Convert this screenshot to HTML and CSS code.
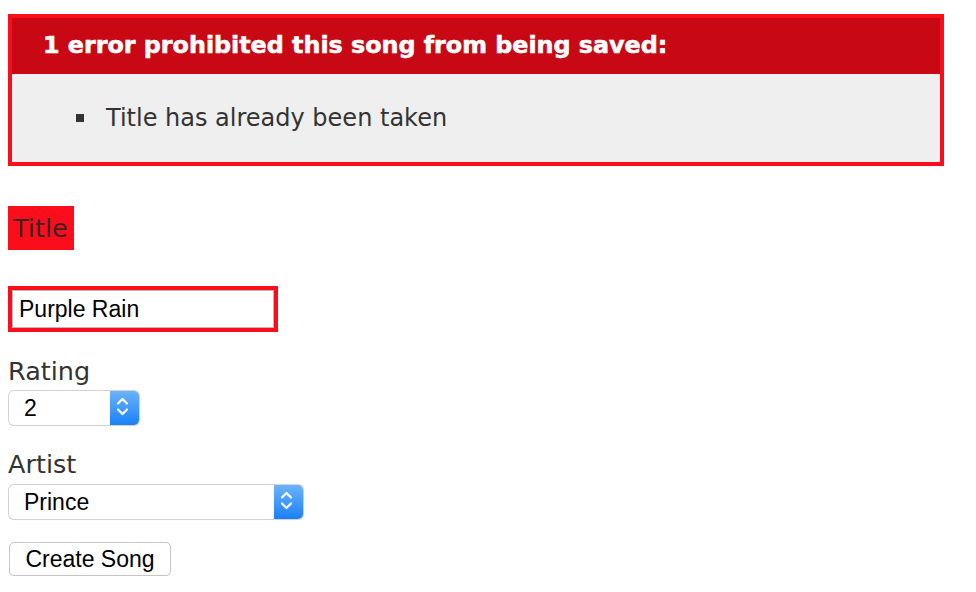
FILE: index.html
```html
<!DOCTYPE html>
<html>
<head>
<meta charset="utf-8">
<link rel="stylesheet" href="styles.css">
</head>
<body>
<form class="song-form">
  <div class="error-box">
    <h2 class="error-head">1 error prohibited this song from being saved:</h2>
    <ul class="error-list">
      <li class="error-item">Title has already been taken</li>
    </ul>
  </div>

  <div class="field field-title">
    <div class="field-error label-error"><label class="label" for="song_title">Title</label></div>
    <div class="field-error input-error"><input class="text-input" id="song_title" type="text" value="Purple Rain"></div>
  </div>

  <div class="field">
    <label class="label" for="song_rating">Rating</label>
    <div class="select-wrap rating-select">
      <select class="select" id="song_rating"><option>2</option></select>
      <span class="stepper"><svg width="29" height="34" viewBox="0 0 29 34"><path d="M8 12.5 L12.5 8 L17 12.5" fill="none" stroke="#fff" stroke-width="2.2" stroke-linecap="round" stroke-linejoin="round"/><path d="M8 18.5 L12.5 23 L17 18.5" fill="none" stroke="#fff" stroke-width="2.2" stroke-linecap="round" stroke-linejoin="round"/></svg></span>
    </div>
  </div>

  <div class="field">
    <label class="label" for="song_artist">Artist</label>
    <div class="select-wrap artist-select">
      <select class="select" id="song_artist"><option>Prince</option></select>
      <span class="stepper"><svg width="29" height="34" viewBox="0 0 29 34"><path d="M8 12.5 L12.5 8 L17 12.5" fill="none" stroke="#fff" stroke-width="2.2" stroke-linecap="round" stroke-linejoin="round"/><path d="M8 18.5 L12.5 23 L17 18.5" fill="none" stroke="#fff" stroke-width="2.2" stroke-linecap="round" stroke-linejoin="round"/></svg></span>
    </div>
  </div>

  <div class="actions">
    <button class="submit" type="button">Create Song</button>
  </div>
</form>
</body>
</html>
```
FILE: styles.css
```css
html, body {
  margin: 0;
  padding: 0;
  background: #fff;
}
body {
  font-family: "DejaVu Sans", Verdana, sans-serif;
  color: #333;
}
.song-form {
  display: flex;
  flex-direction: column;
  align-items: flex-start;
  padding: 14px 32px 0 8px;
}
.error-box {
  box-sizing: border-box;
  width: 936px;
  border: 4px solid #fc0d1b;
  background: #efefef;
}
.error-head {
  margin: 0;
  padding: 13px 0 15px 31px;
  background: #c80815;
  color: #fff;
  font-size: 23.8px;
  line-height: 28px;
  font-weight: bold;
  -webkit-text-stroke: 0.6px #fff;
}
.error-list {
  margin: 0;
  padding: 30px 0 30px 64px;
  list-style: none;
}
.error-item {
  display: flex;
  align-items: center;
  gap: 22px;
  font-size: 24px;
  line-height: 28px;
  color: #333;
}
.error-item::before {
  content: "";
  width: 8px;
  height: 8px;
  background: #333;
  flex: none;
}
.field {
  display: flex;
  flex-direction: column;
  align-items: flex-start;
}
.field-title {
  margin-top: 40px;
}
.label {
  font-size: 25.5px;
  line-height: 30px;
  color: #333;
}
.field-error {
  background: #fc0d1b;
}
.label-error {
  padding: 7px 6px 7px 5px;
}
.label-error .label {
  color: #3a2226;
}
.input-error {
  margin-top: 36px;
  padding: 4px;
}
.text-input {
  display: block;
  box-sizing: border-box;
  width: 262px;
  height: 38px;
  margin: 0;
  padding: 0 6px;
  border: 1px solid #b9b9b9;
  background: #fff;
  font-family: "Liberation Sans", Arial, sans-serif;
  font-size: 23px;
  color: #000;
  outline: none;
}
.field-title + .field {
  margin-top: 24px;
}
.field-title + .field + .field {
  margin-top: 24px;
}
.select-wrap {
  display: flex;
  height: 34px;
  margin: 5px 0 0 1px;
  border-radius: 5px;
  box-shadow: 0 0 0 1px #d2d2d2, 0 1px 1px rgba(0,0,0,0.12);
  background: #fff;
  overflow: hidden;
}
.artist-select {
  margin-top: 6px;
}
.rating-select {
  width: 130px;
}
.artist-select {
  width: 294px;
}
.select {
  flex: 1;
  min-width: 0;
  appearance: none;
  -webkit-appearance: none;
  border: none;
  margin: 0;
  padding: 0 0 0 15px;
  background: transparent;
  font-family: "Liberation Sans", Arial, sans-serif;
  font-size: 23px;
  color: #000;
  outline: none;
}
.stepper {
  flex: none;
  width: 29px;
  height: 34px;
  background: linear-gradient(#6cb4fb, #1a80fa);
  display: flex;
}
.actions {
  margin-top: 23px;
}
.submit {
  box-sizing: border-box;
  width: 162px;
  height: 34px;
  margin-left: 1px;
  padding: 0;
  border: 1px solid #c6c6c6;
  border-radius: 5px;
  background: #fff;
  box-shadow: 0 1px 1px rgba(0,0,0,0.08);
  font-family: "Liberation Sans", Arial, sans-serif;
  font-size: 23px;
  color: #000;
}
```
